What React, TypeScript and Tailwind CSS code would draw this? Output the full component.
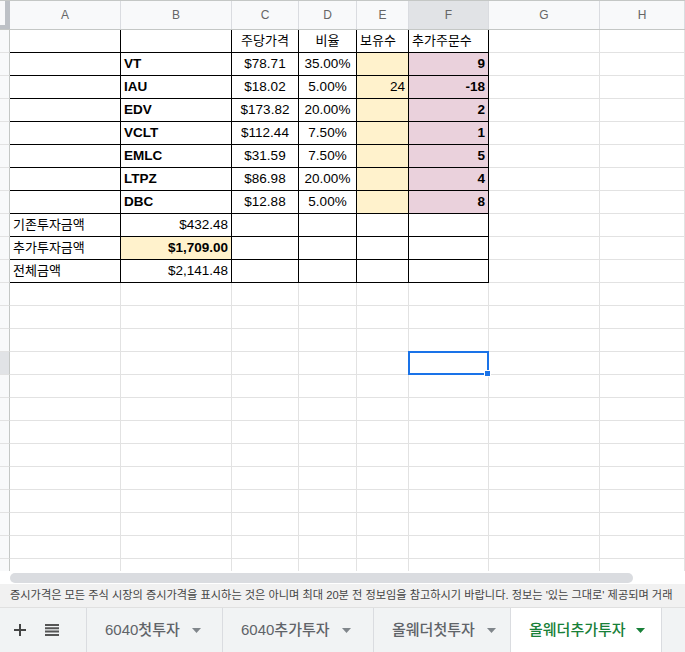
import React from "react";

const FONT = { fontFamily: '"Liberation Sans", Arial, "Noto Sans CJK KR", sans-serif' };

const colWidths = [
  "w-[111px]",
  "w-[111px]",
  "w-[67px]",
  "w-[58px]",
  "w-[52px]",
  "w-[80px]",
  "w-[111px]",
  "flex-1",
];
const letters = ["A", "B", "C", "D", "E", "F", "G", "H"];

type Cell = {
  text?: string;
  align?: "left" | "center" | "right";
  bold?: boolean;
  bg?: "yellow" | "pink";
  ko?: boolean;
};

const tickers: [string, string, string, string, string][] = [
  ["VT", "$78.71", "35.00%", "", "9"],
  ["IAU", "$18.02", "5.00%", "24", "-18"],
  ["EDV", "$173.82", "20.00%", "", "2"],
  ["VCLT", "$112.44", "7.50%", "", "1"],
  ["EMLC", "$31.59", "7.50%", "", "5"],
  ["LTPZ", "$86.98", "20.00%", "", "4"],
  ["DBC", "$12.88", "5.00%", "", "8"],
];

const tableRows: Cell[][] = [
  [
    {},
    {},
    { text: "주당가격", align: "center", ko: true },
    { text: "비율", align: "center", ko: true },
    { text: "보유수", ko: true },
    { text: "추가주문수", ko: true },
  ],
  ...tickers.map(([t, p, r, h, o]) => [
    {},
    { text: t, bold: true },
    { text: p, align: "center" as const },
    { text: r, align: "center" as const },
    { text: h, align: "right" as const, bg: "yellow" as const },
    { text: o, align: "right" as const, bold: true, bg: "pink" as const },
  ]),
  [{ text: "기존투자금액", ko: true }, { text: "$432.48", align: "right" }, {}, {}, {}, {}],
  [
    { text: "추가투자금액", ko: true },
    { text: "$1,709.00", align: "right", bold: true, bg: "yellow" },
    {},
    {},
    {},
    {},
  ],
  [{ text: "전체금액", ko: true }, { text: "$2,141.48", align: "right" }, {}, {}, {}, {}],
];

const TOTAL_ROWS = 24;
const SELECTED_ROW = 15;

function GridCell({ col, cell, inTable, selected }: { col: number; cell?: Cell; inTable: boolean; selected: boolean }) {
  const border = inTable ? "border-r border-b border-black" : "border-r border-b border-[#e2e2e2]";
  const bg = cell?.bg === "yellow" ? "bg-[#fff2cc]" : cell?.bg === "pink" ? "bg-[#ead1dc]" : "bg-white";
  const align =
    cell?.align === "center" ? "justify-center" : cell?.align === "right" ? "justify-end" : "justify-start";
  return (
    <div
      className={`relative h-full shrink-0 flex items-center px-[3px] whitespace-nowrap ${colWidths[col]} ${border} ${bg} ${align} ${
        cell?.bold ? "font-bold" : ""
      } ${cell?.ko ? "text-[13px]" : "text-[13.5px]"} ${selected ? "z-10" : ""}`}
    >
      {cell?.text}
      {selected && (
        <div className="absolute -left-px -top-px -right-px -bottom-px border-2 border-[#1a73e8]">
          <div className="absolute -right-[4px] -bottom-[4px] w-[7px] h-[7px] bg-[#1a73e8] border border-white" />
        </div>
      )}
    </div>
  );
}

function Triangle({ color }: { color: string }) {
  return (
    <svg width="9" height="5" viewBox="0 0 9 5" className="shrink-0">
      <path d="M0 0 L9 0 L4.5 5 Z" fill={color} />
    </svg>
  );
}

const tabs = [
  { name: "6040첫투자", w: "w-[136px]" },
  { name: "6040추가투자", w: "w-[151px]" },
  { name: "올웨더첫투자", w: "w-[137px]" },
];

export default function App() {
  return (
    <div className="w-[685px] h-[652px] flex flex-col bg-white text-[13px] text-black overflow-hidden" style={FONT}>
      {/* grid */}
      <div className="h-[571px] shrink-0 flex flex-col overflow-hidden">
        {/* column headers */}
        <div className="h-[30px] shrink-0 flex border-t border-b border-[#c4c7c5] bg-[#f8f9fa]">
          <div className="w-[10px] shrink-0 h-full border-r-[5px] border-b-[4px] border-[#bdc1c6]" />
          {letters.map((l, i) => (
            <div
              key={l}
              className={`h-full shrink-0 flex items-center justify-center text-[12px] text-[#666] border-r border-[#dadce0] ${colWidths[i]} ${
                l === "F" ? "bg-[#e1e3e6]" : ""
              }`}
            >
              {l}
            </div>
          ))}
        </div>

        {Array.from({ length: TOTAL_ROWS }, (_, r) => {
          const rowNo = r + 1;
          const data = tableRows[r];
          return (
            <div key={rowNo} className="h-[23px] shrink-0 flex">
              <div
                className={`w-[10px] shrink-0 h-full border-r border-b border-r-[#c4c7c5] border-b-[#e2e2e2] ${
                  rowNo === SELECTED_ROW ? "bg-[#e1e3e6]" : "bg-[#f8f9fa]"
                }`}
              />
              {colWidths.map((_, c) => (
                <GridCell
                  key={c}
                  col={c}
                  cell={data ? data[c] : undefined}
                  inTable={!!data && c < 6}
                  selected={rowNo === SELECTED_ROW && c === 5}
                />
              ))}
            </div>
          );
        })}
      </div>

      {/* horizontal scrollbar */}
      <div className="h-[13px] shrink-0 flex items-center pl-[10px] pr-[52px] bg-white">
        <div className="h-[10px] w-full rounded-full bg-[#dadce0]" />
      </div>

      {/* notice */}
      <div className="h-[23px] shrink-0 flex items-center px-[10px] bg-[#f1f1f1] text-[11.2px] text-[#444] whitespace-nowrap overflow-hidden">
        증시가격은 모든 주식 시장의 증시가격을 표시하는 것은 아니며 최대 20분 전 정보임을 참고하시기 바랍니다. 정보는 '있는 그대로' 제공되며 거래
      </div>

      {/* sheet tabs */}
      <div className="flex-1 flex bg-[#f1f3f4] border-t border-[#e0e0e0]">
        <div className="w-[87px] shrink-0 flex items-center gap-[19px] pl-[14px] border-r border-[#dadce0]">
          <svg width="12" height="12" viewBox="0 0 12 12">
            <path d="M5 0h2v5h5v2H7v5H5V7H0V5h5z" fill="#444" />
          </svg>
          <svg width="14" height="12" viewBox="0 0 14 12">
            <path d="M0 0h14v2H0zM0 3.3h14v2H0zM0 6.6h14v2H0zM0 10h14v2H0z" fill="#555" />
          </svg>
        </div>
        {tabs.map((t) => (
          <div
            key={t.name}
            className={`shrink-0 flex items-center gap-[12px] pl-[18px] border-r border-[#dadce0] text-[15px] font-medium text-[#5f6368] ${t.w}`}
          >
            <span>{t.name}</span>
            <Triangle color="#80868b" />
          </div>
        ))}
        <div className="w-[151px] shrink-0 flex items-center gap-[10px] pl-[18px] bg-white border-r border-[#dadce0] text-[15px] font-medium text-[#188038]">
          <span>올웨더추가투자</span>
          <Triangle color="#188038" />
        </div>
        <div className="flex-1" />
      </div>
    </div>
  );
}
